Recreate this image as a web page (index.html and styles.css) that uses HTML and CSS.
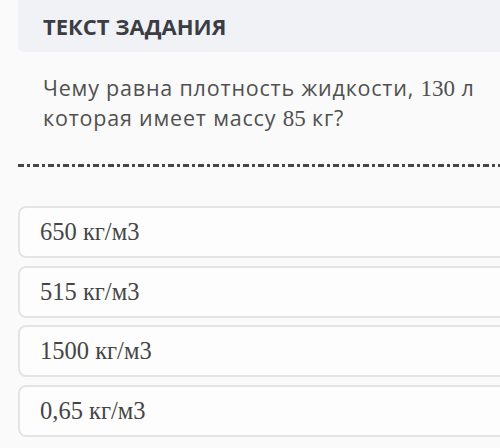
FILE: index.html
```html
<!DOCTYPE html>
<html lang="ru">
<head>
    <meta charset="UTF-8">
    <meta name="viewport" content="width=device-width, initial-scale=1.0">
    <title>Текст задания</title>
    <link rel="stylesheet" href="styles.css">
</head>
<body>
    <div class="task">
        <div class="task-header">
            <h2>ТЕКСТ ЗАДАНИЯ</h2>
        </div>

        <p class="question">Чему равна плотность жидкости, <span class="num">130</span> л которая имеет массу <span class="num">85</span> кг?</p>

        <div class="divider"></div>

        <div class="answers">
            <div class="answer">650 кг/м3</div>
            <div class="answer">515 кг/м3</div>
            <div class="answer">1500 кг/м3</div>
            <div class="answer">0,65 кг/м3</div>
        </div>
    </div>
</body>
</html>
```

FILE: styles.css
```css
body {
    margin: 0;
    padding: 0;
    background: #fafafa;
    font-family: "Open Sans", Arial, sans-serif;
    overflow: hidden;
}
.task {
    margin-left: 18px;
    margin-right: -20px;
}
.task-header {
    height: 52px;
    background: #f1f2f6;
    border-radius: 0 0 0 6px;
    padding-left: 25px;
    display: flex;
    align-items: center;
}
.task-header h2 {
    margin: 0;
    font-size: 22px;
    font-weight: bold;
    color: #3b3d45;
}
.question {
    margin: 21px 0 0 0;
    padding-left: 25px;
    padding-right: 40px;
    font-size: 21.5px;
    line-height: 29px;
    letter-spacing: 0.8px;
    color: #505050;
}
.num {
    font-family: "Liberation Serif", serif;
    font-size: 23px;
    letter-spacing: 0;
}
.divider {
    margin-top: 31px;
    height: 3px;
    background: repeating-linear-gradient(90deg, #474747 0 6px, transparent 6px 9px, #474747 9px 12px, transparent 12px 15px);
}
.answers {
    margin-top: 39px;
    display: flex;
    flex-direction: column;
    gap: 7.5px;
}
.answer {
    height: 48px;
    border: 2px solid #e4e4e4;
    border-radius: 8px;
    background: #fdfdfd;
    padding-left: 20px;
    display: flex;
    align-items: center;
    font-family: "Liberation Serif", serif;
    font-size: 24.5px;
    color: #454545;
}
```
